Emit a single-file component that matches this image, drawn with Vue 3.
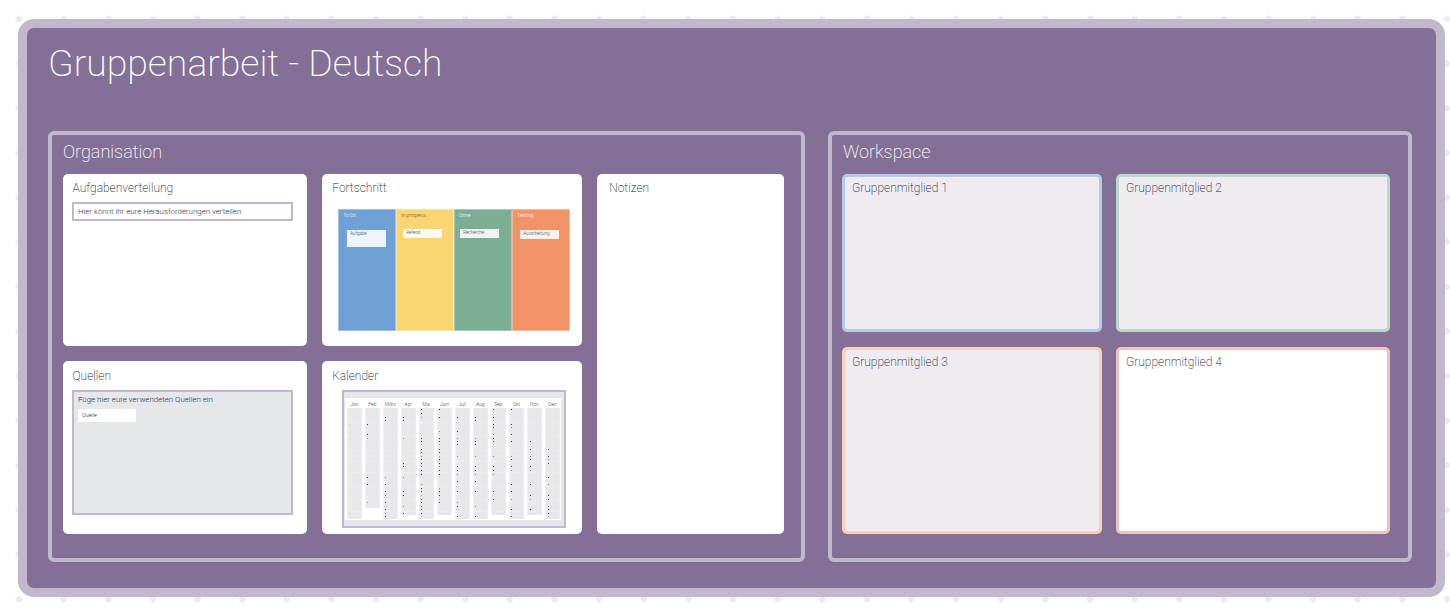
<template>
  <div class="page">
    <div class="board">
      <h1 class="board-title">Gruppenarbeit - Deutsch</h1>
      <div class="sections">
        <section class="panel">
          <h2>Organisation</h2>
          <div class="org-grid">
            <div class="card">
              <h3>Aufgabenverteilung</h3>
              <div class="hint-box">Hier könnt ihr eure Herausforderungen verteilen</div>
            </div>

            <div class="card">
              <h3>Fortschritt</h3>
              <div class="kanban">
                <div v-for="col in kanban" :key="col.name" class="kanban-col" :class="col.cls">
                  <span class="kanban-name">{{ col.name }}</span>
                  <div class="kanban-card">{{ col.task }}</div>
                </div>
              </div>
            </div>

            <div class="card notes">
              <h3>Notizen</h3>
            </div>

            <div class="card lower">
              <h3>Quellen</h3>
              <div class="sources">
                <p>Füge hier eure verwendeten Quellen ein</p>
                <div class="source-chip">Quelle</div>
              </div>
            </div>

            <div class="card lower">
              <h3>Kalender</h3>
              <div class="calendar">
                <svg width="220" height="134" viewBox="0 0 220 134">
                  <rect x="1" y="6" width="216" height="122" fill="#fff" />
                  <g v-for="(m, i) in months" :key="m.name">
                    <text :x="colX(i) + 7" y="14" class="month">{{ m.name }}</text>
                    <rect :x="colX(i)" y="16" width="14.4" :height="m.h" fill="#e8e8ec" />
                    <rect
                      v-for="line in rowLines"
                      :key="line"
                      v-show="line < 16 + m.h"
                      :x="colX(i)"
                      :y="line"
                      width="14.4"
                      height="0.7"
                      fill="#eeeef1"
                    />
                    <rect
                      v-for="(d, j) in m.dots"
                      :key="j"
                      :x="Math.round(colX(i) + m.dx)"
                      :y="dotY(d)"
                      width="1"
                      height="1"
                      :fill="dotColor(m, j)"
                    />
                  </g>
                </svg>
              </div>
            </div>
          </div>
        </section>

        <section class="panel">
          <h2>Workspace</h2>
          <div class="members">
            <div v-for="m in members" :key="m.name" class="member" :class="m.cls">{{ m.name }}</div>
          </div>
        </section>
      </div>
    </div>
  </div>
</template>

<script setup>
const kanban = [
  { name: 'To Do', task: 'Aufgabe', cls: 'blue' },
  { name: 'In progress', task: 'Referat', cls: 'yellow' },
  { name: 'Done', task: 'Recherche', cls: 'green' },
  { name: 'Testing', task: 'Ausarbeitung', cls: 'orange' }
]

const members = [
  { name: 'Gruppenmitglied 1', cls: 'm-blue' },
  { name: 'Gruppenmitglied 2', cls: 'm-green' },
  { name: 'Gruppenmitglied 3', cls: 'm-orange' },
  { name: 'Gruppenmitglied 4', cls: 'm-pink' }
]

// dot y values were read from the 3x crop of the thumbnail
const months = [
  { name: 'Jan', h: 111, dx: 2, faint: true, dots: [118, 160, 385] },
  { name: 'Feb', h: 100, dx: 2, dots: [118, 148, 160, 277, 298, 352] },
  { name: 'März', h: 111, dx: 2, dots: [97, 106, 277, 298, 319, 330, 352, 373, 385, 394] },
  { name: 'Apr', h: 107, dx: 2, dots: [95, 106, 160, 235, 244, 277, 319, 330, 364, 385] },
  { name: 'Mai', h: 111, dx: 2, dots: [72, 85, 97, 160, 169, 178, 193, 202, 214, 223, 235, 244, 256, 268, 298, 310, 319, 330, 342, 352, 364, 373, 385] },
  { name: 'Juni', h: 107, dx: 2, dots: [72, 95, 139, 160, 169, 178, 193, 202, 214, 223, 235, 244, 256, 268, 310, 319, 330, 342, 352] },
  { name: 'Juli', h: 111, dx: 2, dots: [95, 139, 160, 169, 178, 214, 244, 256, 268, 289, 319, 352, 364, 394] },
  { name: 'Aug', h: 111, dx: 2, dots: [95, 106, 160, 169, 178, 214, 244, 256, 268, 289, 319, 364, 394] },
  { name: 'Sep', h: 107, dx: 2, dots: [72, 95, 106, 118, 127, 148, 160, 169, 214, 244, 256, 268, 319, 342] },
  { name: 'Okt', h: 111, dx: 2, dots: [72, 118, 127, 148, 169, 214, 223, 244, 256, 298, 319, 342, 373, 394] },
  { name: 'Nov', h: 107, dx: 3, dots: [169, 193, 214, 223, 244, 256, 298, 330, 342, 373] },
  { name: 'Dez', h: 111, dx: 3, dots: [193, 214, 223, 235, 277, 298, 330, 342, 364, 373, 385, 394] }
]

const rowLines = [30, 44, 58, 69, 80, 94, 108, 119]

const colX = (i) => 3.4 + i * 18
const dotY = (y) => Math.round(y / 3 - 7)
const dotColor = (m, j) => {
  if (m.faint) return '#c9c9d2'
  return j % 3 === 2 ? '#8f90a2' : '#3f4256'
}
</script>

<style>
html,
body {
  height: 100%;
  margin: 0;
  background-color: #fff;
  background-image: radial-gradient(circle, #ececec 3px, transparent 3.6px);
  background-size: 44.64px 44.64px;
  background-position: -3.3px -3.3px;
  overflow: hidden;
}
</style>

<style scoped>
.page {
  padding: 19px 5px 12px 18px;
  font-family: Roboto, "Liberation Sans", sans-serif;
  font-weight: 300;
}

.board {
  box-sizing: border-box;
  height: 578px;
  padding: 13px 24px 26px 21px;
  background: #847096;
  border: 9px solid #c2b8cd;
  border-radius: 16px;
  display: flex;
  flex-direction: column;
  justify-content: space-between;
}

.board-title {
  margin: 0;
  color: #fff;
  font-size: 37.4px;
  font-weight: 200;
  line-height: 44px;
}

.sections {
  display: grid;
  grid-template-columns: 757px 584px;
  column-gap: 23px;
  height: 431px;
}

.panel {
  box-sizing: border-box;
  border: 4px solid #c2b8cd;
  border-radius: 6px;
  padding: 5px 18px 24px 10px;
}

.panel:first-child {
  padding-left: 10.5px;
  padding-right: 17px;
}

.panel h2 {
  margin: 0 0 11px 1px;
  color: #fff;
  font-size: 18px;
  font-weight: 200;
  line-height: 23px;
}

.panel:first-child h2 {
  margin-left: 0.5px;
}

.org-grid {
  display: grid;
  grid-template-columns: 244.7px 260px 187px;
  grid-template-rows: 172px 173px;
  column-gap: 15px;
  row-gap: 15px;
}

.card {
  box-sizing: border-box;
  padding: 6px 10px;
  background: #fff;
  border-radius: 5px;
  min-width: 0;
}

.card.lower {
  padding-top: 7px;
}

.card h3 {
  margin: 0;
  color: #23263a;
  font-size: 12px;
  font-weight: 200;
  line-height: 16px;
}

.notes {
  grid-column: 3;
  grid-row: 1 / 3;
  padding-left: 12px;
}

.hint-box {
  box-sizing: border-box;
  width: 221px;
  height: 19px;
  margin: 6px 0 0 -0.5px;
  padding-left: 4px;
  border: 2px solid #c2b8cd;
  color: #2c2f42;
  font-size: 7.9px;
  line-height: 15px;
  white-space: nowrap;
  overflow: hidden;
}

.kanban {
  display: grid;
  grid-template-columns: repeat(4, 1fr);
  width: 232px;
  height: 122px;
  margin: 12.5px 0 0 6px;
}

.kanban-col {
  box-sizing: border-box;
  border: 1px solid rgba(255, 255, 255, 0.35);
  font-size: 5px;
  line-height: 7px;
  padding: 2px 4px;
  color: #fff;
}

.kanban-name {
  display: block;
  height: 7px;
}

.kanban-col.blue { background: #70a1d6; }
.kanban-col.yellow { background: #fad672; color: #5c5640; }
.kanban-col.green { background: #7bae95; }
.kanban-col.orange { background: #f19366; }

.kanban-card {
  box-sizing: border-box;
  width: 39px;
  height: 9px;
  margin: 10px 0 0 2px;
  padding-left: 3px;
  background: rgba(255, 255, 255, 0.88);
  color: #3f4256;
  font-size: 4.5px;
  line-height: 8px;
  white-space: nowrap;
}

.blue .kanban-card {
  height: 17px;
  margin: 11px 0 0 4px;
}

.green .kanban-card {
  margin-left: 1px;
}

.orange .kanban-card {
  margin: 11px 0 0 3px;
}

.sources {
  box-sizing: border-box;
  width: 221px;
  height: 125px;
  margin: 6px 0 0 -0.5px;
  padding: 2px 4px;
  background: #e6e7ea;
  border: 2px solid #c2b8cd;
  color: #2c2f42;
}

.sources p {
  margin: 0;
  font-size: 7.9px;
  line-height: 12px;
}

.source-chip {
  box-sizing: border-box;
  width: 58px;
  height: 13px;
  margin-top: 3px;
  padding-left: 4px;
  background: #fff;
  font-size: 5.5px;
  line-height: 12px;
}

.calendar {
  box-sizing: border-box;
  width: 224px;
  height: 138px;
  margin: 6px 0 0 10px;
  background: #e6e7ea;
  border: 2px solid #c2b8cd;
}

.calendar svg {
  display: block;
}

.month {
  fill: #3f4256;
  font-size: 5px;
  text-anchor: middle;
}

.members {
  display: grid;
  grid-template-columns: 260px 274px;
  grid-template-rows: 158px 187px;
  column-gap: 14px;
  row-gap: 15px;
}

.member {
  box-sizing: border-box;
  padding: 4px 7px;
  background: #eeecf1;
  border: 3px solid;
  border-radius: 5px;
  color: #23263a;
  font-size: 12px;
  font-weight: 200;
  line-height: 16px;
}

.member:nth-child(-n + 2) {
  padding-top: 3px;
}

.m-blue { border-color: #b3cde8; }
.m-green { border-color: #bad8cb; }
.m-orange { border-color: #f9cfba; }
.m-pink { border-color: #f3c1c1; background: #fff; }
</style>
